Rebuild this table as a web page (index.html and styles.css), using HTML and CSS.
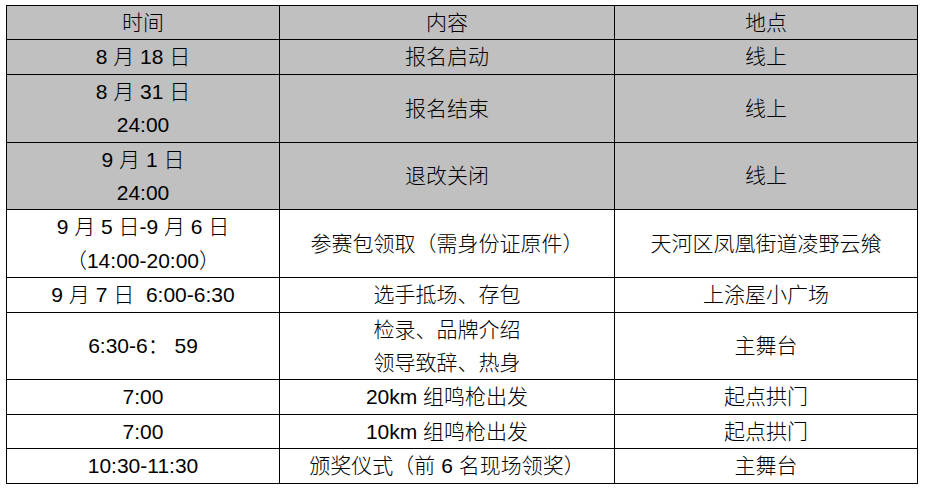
FILE: index.html
```html
<!DOCTYPE html>
<html lang="zh">
<head>
<meta charset="utf-8">
<link rel="stylesheet" href="styles.css">
</head>
<body>
<table class="schedule">
  <colgroup>
    <col class="c-time">
    <col class="c-what">
    <col class="c-where">
  </colgroup>
  <tr class="shade">
    <td>时间</td><td>内容</td><td>地点</td>
  </tr>
  <tr class="shade">
    <td>8 月 18 日</td><td>报名启动</td><td>线上</td>
  </tr>
  <tr class="shade">
    <td>8 月 31 日<br>24:00</td><td>报名结束</td><td>线上</td>
  </tr>
  <tr class="shade">
    <td>9 月 1 日<br>24:00</td><td>退改关闭</td><td>线上</td>
  </tr>
  <tr>
    <td>9 月 5 日-9 月 6 日<br>（14:00-20:00）</td><td>参赛包领取（需身份证原件）</td><td>天河区凤凰街道凌野云飨</td>
  </tr>
  <tr>
    <td>9 月 7 日&nbsp; 6:00-6:30</td><td>选手抵场、存包</td><td>上涂屋小广场</td>
  </tr>
  <tr>
    <td>6:30-6： 59</td><td>检录、品牌介绍<br>领导致辞、热身</td><td>主舞台</td>
  </tr>
  <tr>
    <td>7:00</td><td>20km 组鸣枪出发</td><td>起点拱门</td>
  </tr>
  <tr>
    <td>7:00</td><td>10km 组鸣枪出发</td><td>起点拱门</td>
  </tr>
  <tr>
    <td>10:30-11:30</td><td>颁奖仪式（前 6 名现场领奖）</td><td>主舞台</td>
  </tr>
</table>
</body>
</html>
```
FILE: styles.css
```css
html, body {
  margin: 0;
  padding: 0;
  background: #ffffff;
}
body {
  padding: 5px 0 0 6px;
}
.schedule {
  border-collapse: collapse;
  table-layout: fixed;
  width: 911px;
  font-family: "Liberation Sans", "Noto Sans CJK SC", sans-serif;
  font-size: 21px;
  font-weight: 300;
  color: #000000;
}
.c-time { width: 273px; }
.c-what { width: 335px; }
.c-where { width: 303px; }
.schedule td {
  border: 1px solid #000000;
  padding: 0;
  text-align: center;
  vertical-align: middle;
  line-height: 33.4px;
  white-space: nowrap;
}
.shade td {
  background: #c0c0c0;
}
```
